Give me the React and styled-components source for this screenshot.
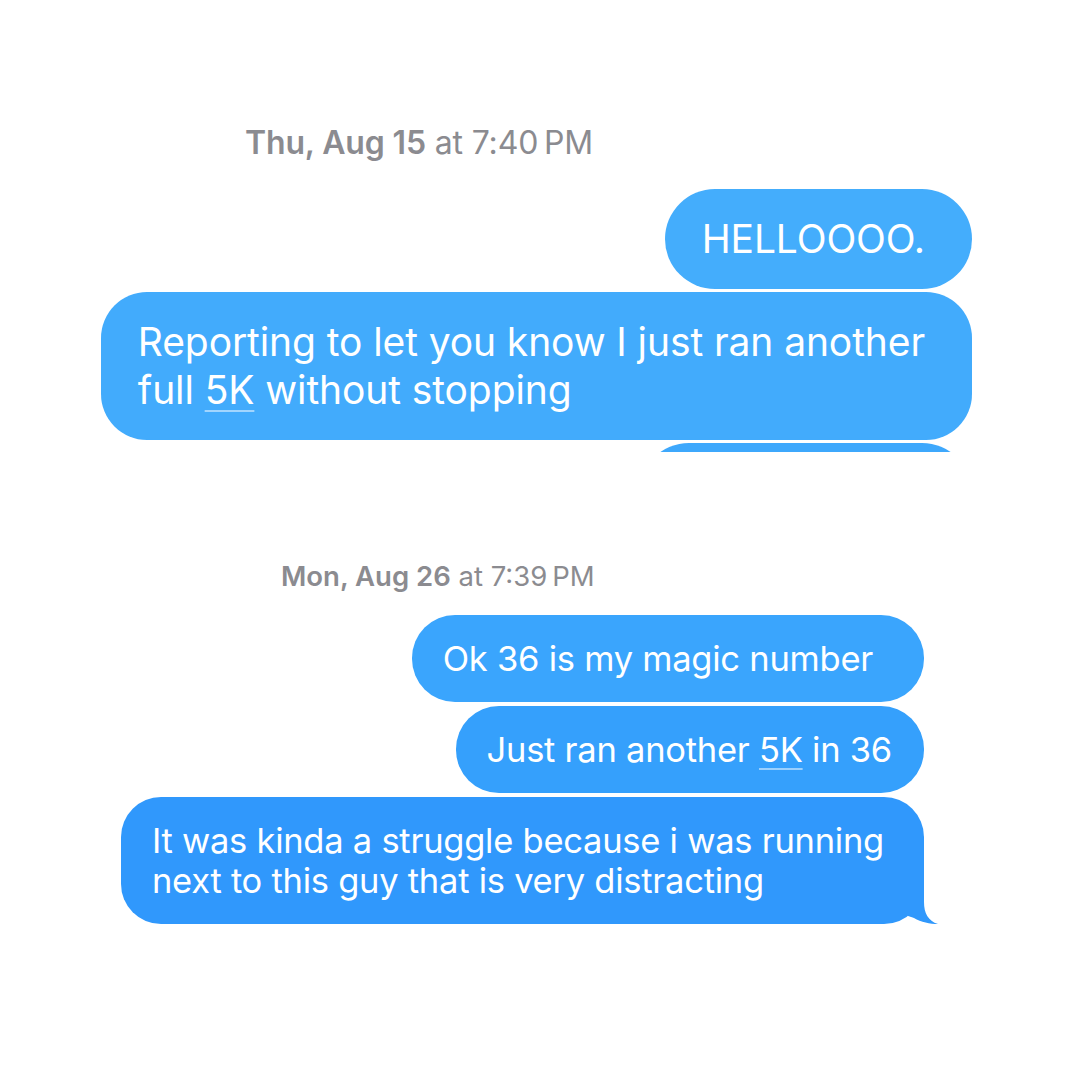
import React from "react";
import styled, { createGlobalStyle, css } from "styled-components";

const GlobalStyle = createGlobalStyle`
  html, body {
    margin: 0;
    padding: 0;
    background: #ffffff;
  }
  body {
    font-family: "Inter", "Noto Sans", "Liberation Sans", sans-serif;
    -webkit-font-smoothing: antialiased;
  }
`;

const Page = styled.main`
  width: 1080px;
  height: 1080px;
  overflow: hidden;
  background: #ffffff;
  display: flex;
  flex-direction: column;
`;

const Shot = styled.section`
  display: flex;
  flex-direction: column;
  overflow: hidden;
  flex-shrink: 0;
  ${(p) => p.$height && css`height: ${p.$height}px;`}
  padding-top: ${(p) => p.$top}px;
  box-sizing: border-box;
`;

const Stamp = styled.div`
  color: #8b8b90;
  white-space: nowrap;
  ${(p) =>
    p.$size === "lg"
      ? css`
          font-size: 32px;
          line-height: 38px;
          letter-spacing: -0.15px;
          padding-left: 245px;
          margin-bottom: 27px;
        `
      : css`
          font-size: 27.5px;
          line-height: 32px;
          letter-spacing: 0;
          padding-left: 281px;
          margin-bottom: 23px;
        `}
`;

const StampDay = styled.span`
  font-weight: 600;
`;

const Thread = styled.div`
  display: flex;
  flex-direction: column;
  align-items: flex-end;
  padding-right: ${(p) => p.$right}px;
  gap: ${(p) => p.$gap}px;
`;

const Bubble = styled.div`
  position: relative;
  box-sizing: border-box;
  color: #ffffff;
  background: ${(p) => p.$bg};
  white-space: pre-line;
  font-weight: 400;
  ${(p) => p.$minWidth && css`min-width: ${p.$minWidth}px;`}
  ${(p) =>
    p.$size === "lg"
      ? css`
          font-size: 39px;
          line-height: 48px;
          letter-spacing: -0.1px;
          padding: 26px ${47 + (p.$extra || 0)}px 26px 37px;
          border-radius: 50px;
          min-height: 100px;
        `
      : css`
          font-size: 34.5px;
          line-height: 40px;
          letter-spacing: -0.25px;
          padding: 24px ${32 + (p.$extra || 0)}px 23px 31px;
          border-radius: 43px;
        `}
  ${(p) => p.$multi && css`border-radius: ${p.$size === "lg" ? 46 : 40}px;`}
`;

const DataLink = styled.span`
  text-decoration: underline;
  text-decoration-color: rgba(255, 255, 255, 0.5);
  text-decoration-thickness: 2px;
  text-underline-offset: 6px;
`;

const Tail = styled.svg`
  position: absolute;
  right: -16px;
  bottom: 0;
  width: 32px;
  height: 42px;
  display: block;
`;

function BubbleTail({ color }) {
  return (
    <Tail viewBox="0 0 32 42" aria-hidden="true">
      <path
        d="M16 0 L16 20 C16 31 20 39 30 42 C22 42 13 40 6 36 C3 35 1 34 0 34 L0 0 Z"
        fill={color}
      />
    </Tail>
  );
}

export default function App() {
  const lastColor = "#3098fc";
  return (
    <>
      <GlobalStyle />
      <Page>
        <Shot $height={452} $top={124}>
          <Stamp $size="lg">
            <StampDay>Thu, Aug 15</StampDay> at 7:40{"\u202F"}PM
          </Stamp>
          <Thread $right={108} $gap={3}>
            <Bubble $size="lg" $bg="#44adfc">
              HELLOOOO.
            </Bubble>
            <Bubble $size="lg" $multi $bg="#42abfc">
              {"Reporting to let you know I just ran another\nfull "}
              <DataLink>5K</DataLink>
              {" without stopping"}
            </Bubble>
            <Bubble $size="lg" $bg="#3ea8fc" $minWidth={333} aria-hidden="true">
              {"\u00a0"}
            </Bubble>
          </Thread>
        </Shot>

        <Shot $top={108}>
          <Stamp $size="sm">
            <StampDay>Mon, Aug 26</StampDay> at 7:39{"\u202F"}PM
          </Stamp>
          <Thread $right={156} $gap={4}>
            <Bubble $size="sm" $bg="#3aa5fd" $extra={19}>
              Ok 36 is my magic number
            </Bubble>
            <Bubble $size="sm" $bg="#35a0fc">
              {"Just ran another "}
              <DataLink>5K</DataLink>
              {" in 36"}
            </Bubble>
            <Bubble $size="sm" $multi $bg={lastColor} $extra={8}>
              {"It was kinda a struggle because i was running\nnext to this guy that is very distracting"}
              <BubbleTail color={lastColor} />
            </Bubble>
          </Thread>
        </Shot>
      </Page>
    </>
  );
}
